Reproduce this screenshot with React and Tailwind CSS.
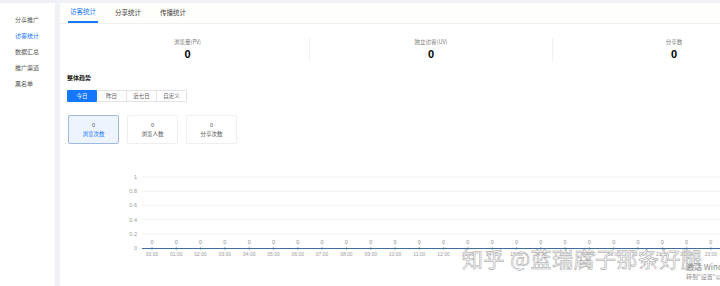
// 访客统计页：左侧菜单 + 顶部标签 + 概览数字 + 趋势图
const menu = ['分享推广', '访客统计', '数据汇总', '推广渠道', '黑名单']
const tabs = ['访客统计', '分享统计', '传播统计']
const stats = [
  { label: '浏览量(PV)', value: 0 },
  { label: '独立访客(UV)', value: 0 },
  { label: '分享数', value: 0 },
]
const ranges = ['今日', '昨日', '近七日', '自定义']
const cards = ['浏览次数', '浏览人数', '分享次数']

function TrendChart() {
  // 坐标以内容区左上角为原点（页面 x-60, y-171）
  const yTicks = [
    { v: '1', y: 6 },
    { v: '0.8', y: 20.2 },
    { v: '0.6', y: 34.4 },
    { v: '0.4', y: 48.6 },
    { v: '0.2', y: 62.8 },
    { v: '0', y: 77 },
  ]
  const hours = Array.from({ length: 24 }, (_, i) => i)
  return (
    <svg width="660" height="95" className="block font-['Liberation_Sans',sans-serif]">
      {yTicks.map((t) => (
        <g key={t.v}>
          <text x="77" y={t.y + 2} fontSize="5.5" fill="#9a9a9a" textAnchor="end">
            {t.v}
          </text>
          {t.v !== '0' && <line x1="82" x2="660" y1={t.y} y2={t.y} stroke="#eeeeee" strokeWidth="0.8" />}
        </g>
      ))}
      <line x1="82" x2="660" y1="77.5" y2="77.5" stroke="#3f6f9f" strokeWidth="1.2" />
      {hours.map((h) => {
        const x = 92 + h * 24.3
        const label = `${String(h).padStart(2, '0')}:00`
        return (
          <g key={h}>
            <text x={x} y="73" fontSize="5.5" fill="#8a8a8a" textAnchor="middle">
              0
            </text>
            <circle cx={x} cy="77.5" r="1" fill="#3f6f9f" />
            <text x={x} y="85" fontSize="5" fill="#9a9a9a" textAnchor="middle">
              {label}
            </text>
          </g>
        )
      })}
    </svg>
  )
}

export default function App() {
  return (
    <div className="relative w-[720px] h-[286px] overflow-hidden bg-[#eff1f5] pt-[3px] font-['Noto_Sans_CJK_SC',sans-serif]">
      <div className="flex h-full gap-[5px]">
        {/* 左侧菜单 */}
        <div className="w-[55px] shrink-0 bg-white pt-[8px]">
          {menu.map((m) => (
            <div
              key={m}
              className={`h-[16px] pl-[15px] flex items-center text-[6px] ${
                m === '访客统计' ? 'text-[#1677ff]' : 'text-[#555]'
              }`}
            >
              {m}
            </div>
          ))}
        </div>

        {/* 内容区 */}
        <div className="flex-1 min-w-0 bg-white">
          <div className="h-[21px] flex items-end gap-[15px] pl-[8px] border-b border-[#f0f0f0] bg-[#fefefa]">
            {tabs.map((t, i) => (
              <div
                key={t}
                className={`h-full px-[2px] flex items-center text-[6.5px] ${
                  i === 0 ? 'text-[#1677ff] border-b-2 border-[#1677ff]' : 'text-[#444]'
                }`}
              >
                {t}
              </div>
            ))}
          </div>

          <div className="mt-[14px] ml-[6px] flex w-[729px]">
            {stats.map((s, i) => (
              <div
                key={s.label}
                className={`w-[243px] h-[24px] flex flex-col items-center ${i > 0 ? 'border-l border-[#f0f0f0]' : ''}`}
              >
                <div className="text-[5.5px] leading-[8px] text-[#777]">{s.label}</div>
                <div className="mt-[2px] text-[11px] leading-[12px] font-bold text-black font-['Liberation_Sans',sans-serif]">
                  {s.value}
                </div>
              </div>
            ))}
          </div>

          <div className="mt-[12px] ml-[7px] text-[6px] leading-[8px] font-bold text-[#222]">整体趋势</div>

          <div className="mt-[8px] ml-[7px] flex">
            {ranges.map((r, i) => (
              <div
                key={r}
                className={`w-[30px] h-[12px] flex items-center justify-center text-[5.5px] ${
                  i === 0
                    ? 'bg-[#1677ff] text-white rounded-[1px]'
                    : 'border border-[#e3e3e3] border-l-0 text-[#555]'
                }`}
              >
                {r}
              </div>
            ))}
          </div>

          <div className="mt-[13px] ml-[8px] flex gap-[8px]">
            {cards.map((c, i) => (
              <div
                key={c}
                className={`w-[51px] h-[29px] rounded-[2px] flex flex-col items-center justify-center text-[5.5px] leading-[9px] ${
                  i === 0 ? 'bg-[#eef4fe] border border-[#9fb9e0] text-[#1677ff]' : 'border border-[#efefef] text-[#555]'
                }`}
              >
                <div className="text-[#555] font-['Liberation_Sans',sans-serif]">0</div>
                <div>{c}</div>
              </div>
            ))}
          </div>

          <div className="mt-[27px]">
            <TrendChart />
          </div>
        </div>
      </div>

      {/* 截图上的水印 */}
      <div className="absolute left-[462px] top-[245px] text-[21px] leading-[26px] text-[#fbfbfb] [-webkit-text-stroke:0.5px_#a0a0a0] tracking-[0.5px] whitespace-nowrap">
        知乎 @蓝瑞腐子那条好腿
      </div>
      <div className="absolute left-[686px] top-[262px] text-[8px] leading-[10px] text-[#8a8a8a] whitespace-nowrap">
        <div>激活 Windows</div>
        <div className="text-[6px]">转到"设置"以激活 Windows。</div>
      </div>
    </div>
  )
}
